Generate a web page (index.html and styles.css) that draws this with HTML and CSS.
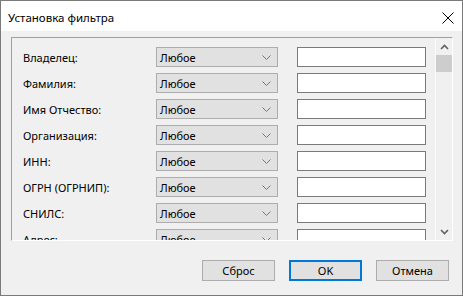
FILE: index.html
```html
<!DOCTYPE html>
<html>
<head>
<meta charset="utf-8">
<link rel="stylesheet" href="styles.css">
</head>
<body>
<div class="window">
  <div class="titlebar">
    <span class="title">Установка фильтра</span>
    <svg class="close" width="12" height="12" viewBox="0 0 12 12"><path d="M0.5 0.5 L11.5 11.5 M11.5 0.5 L0.5 11.5" stroke="#000" stroke-width="1" fill="none"/></svg>
  </div>
  <div class="client">
    <div class="panel">
      <div class="rows">
        <div class="row"><span class="label">Владелец:</span><div class="combo"><span>Любое</span><svg class="chev" width="9" height="5" viewBox="0 0 9 5"><path d="M0.5 0.5 L4.5 4.5 L8.5 0.5" stroke="#777" fill="none"/></svg></div><div class="input"></div></div>
        <div class="row"><span class="label">Фамилия:</span><div class="combo"><span>Любое</span><svg class="chev" width="9" height="5" viewBox="0 0 9 5"><path d="M0.5 0.5 L4.5 4.5 L8.5 0.5" stroke="#777" fill="none"/></svg></div><div class="input"></div></div>
        <div class="row"><span class="label">Имя Отчество:</span><div class="combo"><span>Любое</span><svg class="chev" width="9" height="5" viewBox="0 0 9 5"><path d="M0.5 0.5 L4.5 4.5 L8.5 0.5" stroke="#777" fill="none"/></svg></div><div class="input"></div></div>
        <div class="row"><span class="label">Организация:</span><div class="combo"><span>Любое</span><svg class="chev" width="9" height="5" viewBox="0 0 9 5"><path d="M0.5 0.5 L4.5 4.5 L8.5 0.5" stroke="#777" fill="none"/></svg></div><div class="input"></div></div>
        <div class="row"><span class="label">ИНН:</span><div class="combo"><span>Любое</span><svg class="chev" width="9" height="5" viewBox="0 0 9 5"><path d="M0.5 0.5 L4.5 4.5 L8.5 0.5" stroke="#777" fill="none"/></svg></div><div class="input"></div></div>
        <div class="row"><span class="label">ОГРН (ОГРНИП):</span><div class="combo"><span>Любое</span><svg class="chev" width="9" height="5" viewBox="0 0 9 5"><path d="M0.5 0.5 L4.5 4.5 L8.5 0.5" stroke="#777" fill="none"/></svg></div><div class="input"></div></div>
        <div class="row"><span class="label">СНИЛС:</span><div class="combo"><span>Любое</span><svg class="chev" width="9" height="5" viewBox="0 0 9 5"><path d="M0.5 0.5 L4.5 4.5 L8.5 0.5" stroke="#777" fill="none"/></svg></div><div class="input"></div></div>
        <div class="row"><span class="label">Адрес:</span><div class="combo"><span>Любое</span><svg class="chev" width="9" height="5" viewBox="0 0 9 5"><path d="M0.5 0.5 L4.5 4.5 L8.5 0.5" stroke="#777" fill="none"/></svg></div><div class="input"></div></div>
      </div>
      <div class="scrollbar">
        <div class="arrow"><svg width="9" height="6" viewBox="0 0 9 6"><path d="M1 5 L4.5 1.5 L8 5" stroke="#606060" stroke-width="1.6" fill="none"/></svg></div>
        <div class="thumb"></div>
        <div class="track"></div>
        <div class="arrow"><svg width="9" height="6" viewBox="0 0 9 6"><path d="M1 1 L4.5 4.5 L8 1" stroke="#606060" stroke-width="1.6" fill="none"/></svg></div>
      </div>
    </div>
    <div class="buttons">
      <div class="btn">Сброс</div>
      <div class="btn default">OK</div>
      <div class="btn">Отмена</div>
    </div>
  </div>
</div>
</body>
</html>
```

FILE: styles.css
```css
html, body {
  margin: 0;
  padding: 0;
  background: #f0f0f0;
}
body {
  font-family: "Noto Sans", sans-serif;
  font-size: 11px;
  color: #000;
}
.window {
  width: 463px;
  height: 296px;
  box-sizing: border-box;
  border: 1px solid #7a7a7a;
  background: #f0f0f0;
  display: flex;
  flex-direction: column;
}
.titlebar {
  height: 30px;
  background: #fff;
  display: flex;
  align-items: center;
  justify-content: space-between;
  padding: 0 8px 0 7px;
  flex: none;
}
.title {
  font-size: 11.5px;
  position: relative;
  top: 1px;
}
.close {
  display: block;
  position: relative;
  top: 2px;
}
.client {
  flex: 1;
  padding: 6px 9px 0 10px;
  display: flex;
  flex-direction: column;
}
.panel {
  height: 204px;
  box-sizing: border-box;
  border-top: 1px solid #a0a0a0;
  border-left: 1px solid #a0a0a0;
  border-right: 1px solid #fff;
  border-bottom: 1px solid #fff;
  display: flex;
  overflow: hidden;
}
.rows {
  flex: 1;
  padding: 9px 0 0 11px;
  display: flex;
  flex-direction: column;
  gap: 6px;
  overflow: hidden;
}
.row {
  display: flex;
  align-items: center;
  height: 20px;
  flex: none;
}
.label {
  width: 133px;
  flex: none;
  white-space: nowrap;
}
.combo {
  width: 122px;
  height: 20px;
  box-sizing: border-box;
  border: 1px solid #adadad;
  background: #e1e1e1;
  display: flex;
  align-items: center;
  justify-content: space-between;
  padding: 0 6px 0 3px;
  flex: none;
}
.chev {
  display: block;
}
.input {
  margin-left: 19px;
  width: 129px;
  height: 20px;
  box-sizing: border-box;
  border: 1px solid #7a7a7a;
  background: #fff;
  flex: none;
}
.scrollbar {
  width: 16px;
  flex: none;
  display: flex;
  flex-direction: column;
  background: #f0f0f0;
  border-left: 1px solid #fafafa;
}
.arrow {
  height: 17px;
  display: flex;
  align-items: center;
  justify-content: center;
  flex: none;
}
.thumb {
  height: 17px;
  background: #cdcdcd;
  flex: none;
}
.track {
  flex: 1;
}
.buttons {
  display: flex;
  justify-content: flex-end;
  gap: 14px;
  padding: 19px 4px 0 0;
}
.btn {
  width: 73px;
  height: 21px;
  box-sizing: border-box;
  border: 1px solid #adadad;
  background: #e1e1e1;
  display: flex;
  align-items: center;
  justify-content: center;
}
.btn.default {
  border: 2px solid #0078d7;
}
```
